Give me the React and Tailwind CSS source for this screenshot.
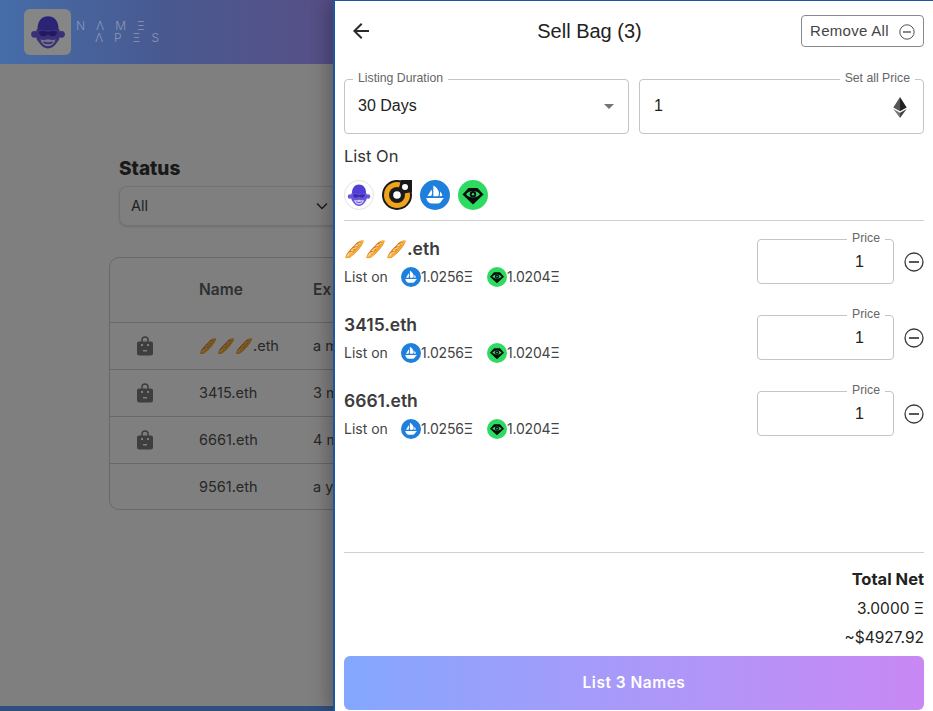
import React from "react";

const sans = "font-['Liberation_Sans',Arial,sans-serif]";
const inter = "font-['Inter',sans-serif]";

function Ape({ className }) {
  return (
    <svg viewBox="0 0 48 48" className={className}>
      <circle cx="6" cy="27" r="4.500" fill="#6a55dc" />
      <circle cx="42" cy="27" r="4.500" fill="#6a55dc" />
      <path d="M9 20h30c2 8 1 14-3 18-3 5-8 8-12 8s-9-3-12-8c-4-4-5-10-3-18z" fill="#6a55dc" />
      <path d="M10 20C10 9 16 3 24 3s14 6 14 17c-8 2-20 2-28 0z" fill="#4f3fd4" />
      <path d="M12 23.500c3-1.500 8-1 12 .5 4-1.500 9-2 12-.5 0 4-3 6-6 6-3 0-5-2-6-3-1 1-3 3-6 3-3 0-6-2-6-6z" fill="#3a2cae" />
      <path d="M14 34c3 1 7 .5 10-.5 3 1 7 1.500 10 .5-1 5-5 9-10 9s-9-4-10-9z" fill="#d6cff8" />
      <path d="M18 37.500c4 2 8 2 12 0" stroke="#5b43cf" strokeWidth="1.800" fill="none" />
    </svg>
  );
}

function OpenSea({ className }) {
  return (
    <svg viewBox="0 0 30 30" className={className}>
      <circle cx="15" cy="15" r="15" fill="#1f7fdc" />
      <path d="M7.500 16 11.500 9.500c1 2.300.9 4.600-.4 6.500z" fill="#fff" />
      <path d="M13.300 5.500c3.500 1.800 5.700 5.100 5.700 8 0 1-.4 2-1 2.800h-4.700z" fill="#fff" />
      <path d="M20 11.500c1.400 1.200 2.300 2.800 2.300 4.200l-2.700.8c.4-1.600.6-3.300.4-5z" fill="#fff" />
      <path d="M6.300 18h17.900c-.6.600-1.400 1-2 1.900-1 1.700-2.200 3.600-4.400 3.600h-6.300c-2.700 0-4.500-2.400-5.200-5.500z" fill="#fff" />
    </svg>
  );
}

function Looks({ className }) {
  return (
    <svg viewBox="0 0 30 30" className={className}>
      <circle cx="15" cy="15" r="15" fill="#2edb62" />
      <path d="M10.500 8h9l6 6.500L15 24.500 4.500 14.500z" fill="#0a0a0a" />
      <path d="M8 14.300c3.800-4.300 10.200-4.300 14 0-3.800 4.300-10.200 4.300-14 0z" fill="#2edb62" />
      <circle cx="15" cy="14.300" r="3.200" fill="#0a0a0a" />
      <circle cx="15" cy="14.300" r="1.200" fill="#2edb62" />
    </svg>
  );
}

function X2() {
  return (
    <svg viewBox="0 0 30 30" className="w-[30px] h-[30px]">
      <circle cx="15" cy="15" r="15" fill="#1a1a1a" />
      <circle cx="15" cy="15" r="13" fill="#f0a41e" />
      <path d="M15 15 19 0h11v12z" fill="#1a1a1a" />
      <circle cx="15" cy="15" r="8" fill="#1a1a1a" />
      <circle cx="15" cy="15" r="3.800" fill="#fff" />
      <circle cx="23" cy="7" r="3" fill="#fff" />
    </svg>
  );
}

function Eth() {
  return (
    <svg viewBox="0 0 14 22" className="w-[14px] h-[21px]">
      <path d="M7 0 0 11l7 4z" fill="#555" />
      <path d="M7 0l7 11-7 4z" fill="#222" />
      <path d="M0 12.500 7 22v-5.500z" fill="#777" />
      <path d="M14 12.500 7 22v-5.500z" fill="#444" />
    </svg>
  );
}

function MinusCircle({ size = "w-5 h-5", stroke = 1.3 }) {
  return (
    <svg viewBox="0 0 20 20" className={size} fill="none" stroke="#3a3a3a" strokeWidth={stroke}>
      <circle cx="10" cy="10" r="9" />
      <path d="M5 10h10" strokeWidth={stroke + 0.4} />
    </svg>
  );
}

function Bag() {
  return (
    <svg viewBox="0 0 16 20" className="w-4 h-5">
      <path d="M5 6V4a3 3 0 0 1 6 0v2" fill="none" stroke="#7c7c7c" strokeWidth="1.500" />
      <path d="M2 5.500h12a2 2 0 0 1 2 2V17a2.500 2.500 0 0 1-2.500 2.500h-11A2.500 2.500 0 0 1 0 17V7.500a2 2 0 0 1 2-2z" fill="#7c7c7c" />
      <path d="M4 8h2v2H4zM10 8h2v2h-2zM6 14h4v1.500H6z" fill="#fff" />
    </svg>
  );
}

function Field({ label, right, className, children }) {
  return (
    <div className={`relative border border-[#c4c4c4] rounded-[4px] ${className}`}>
      <span className={`absolute -top-[9px] ${right ? "right-[8px]" : "left-[8px]"} bg-white px-[5px] text-[12.250px] leading-[14px] text-[#666] ${sans}`}>
        {label}
      </span>
      {children}
    </div>
  );
}

function Row({ emoji, name }) {
  return (
    <div className="flex items-start justify-between h-[76px]">
      <div className={`pt-px ${inter}`}>
        <div className="h-6 text-[17.500px] leading-[24px] font-semibold text-[#3c3c3c]">
          {emoji && <span className="text-[16.700px]">{emoji}</span>}
          {name}
        </div>
        <div className="flex items-center mt-[6px] text-[14px] leading-5 text-[#444]">
          <span className="w-[57px]">List on</span>
          <OpenSea className="w-5 h-5" />
          <span className="w-[66px] text-[14px] tracking-[-0.200px]">1.0256Ξ</span>
          <Looks className="w-5 h-5" />
          <span className="text-[14px] tracking-[-0.200px]">1.0204Ξ</span>
        </div>
      </div>
      <div className="flex items-center mt-[3px]">
        <Field label="Price" right className="w-[137px] h-[45px] flex items-center justify-end pr-[29px]">
          <span className={`text-[16px] text-[#222] ${sans}`}>1</span>
        </Field>
        <div className="ml-[10px]"><MinusCircle /></div>
      </div>
    </div>
  );
}

function TableRow({ name, exp, bag, last }) {
  return (
    <div className={`flex items-center text-[14.500px] text-[#505050] ${last ? "h-[46px]" : "h-[47px] border-b border-[#d0d0d0]"}`}>
      <div className="w-[89px] flex justify-center pr-[20px]">{bag && <Bag />}</div>
      <div className="w-[114px] whitespace-nowrap">{name}</div>
      <div className="whitespace-nowrap">{exp}</div>
    </div>
  );
}

export default function App() {
  return (
    <div className={`relative w-[933px] h-[711px] overflow-hidden bg-white ${inter}`}>
      <header className="relative z-10 h-16 bg-gradient-to-r from-[#466ca8] via-[#48598f] via-[18%] to-[#574e86] to-[36%] flex items-center pl-6">
        <div className="w-[47px] h-[46px] rounded-[6px] bg-[#f3f3f3] brightness-[0.55] flex items-center justify-center">
          <Ape className="w-[36px] h-[36px]" />
        </div>
        <div className={`ml-[5px] text-[12px] leading-[12px] font-light text-[#8e97b5] ${inter}`}>
          <div className="tracking-[11px] whitespace-nowrap">NΛMΞ</div>
          <div className="tracking-[11px] whitespace-nowrap pl-[19px]">ΛPΞS</div>
        </div>
      </header>

      <main className="pl-[109px] h-[642px] w-[333px] overflow-hidden">
        <div className="pl-[10px] pt-[93px] w-[400px]">
          <div className="text-[19px] leading-[24px] font-extrabold text-[#333] -mb-[2px]">Status</div>
          <div className="mt-[7px] w-[300px] h-10 bg-white border border-[#e2e2e2] rounded-[8px] shadow-sm flex items-center justify-between px-[11px] text-[14.500px] text-[#444]">
            <span>All</span>
            <svg viewBox="0 0 12 8" className="w-3 h-2 mr-[79px]" fill="none" stroke="#333" strokeWidth="1.500"><path d="M1 1.500 6 6.500l5-5" /></svg>
          </div>
        </div>
        <div className="mt-[31px] w-[600px] h-[253px] border border-[#d0d0d0] rounded-[10px]">
          <div className="flex items-center h-[65px] border-b border-[#d0d0d0] text-[15.500px] font-semibold text-[#606060]">
            <div className="w-[89px]" />
            <div className="w-[114px]">Name</div>
            <div>Ex</div>
          </div>
          <TableRow bag name="🥖🥖🥖.eth" exp="a m" />
          <TableRow bag name="3415.eth" exp="3 m" />
          <TableRow bag name="6661.eth" exp="4 m" />
          <TableRow last name="9561.eth" exp="a y" />
        </div>
      </main>
      <div className="h-[5px] bg-[#5f9fff]" />

      <div className="absolute inset-0 bg-black/50" />

      <aside className="absolute z-20 top-0 right-0 bottom-0 w-[600px] bg-white border-l-2 border-t border-[#1b56a4] pl-[9px] pr-[9px] flex flex-col shadow-[-6px_0_16px_rgba(0,0,0,0.25)]">
        <div className="flex items-center justify-between mt-[14px] h-8">
          <svg viewBox="0 0 24 24" className="w-6 h-6 ml-[5px]" fill="#2a2a2a"><path d="M20 11H7.830l5.590-5.590L12 4l-8 8 8 8 1.410-1.410L7.830 13H20z" /></svg>
          <div className={`ml-[5px] text-[20px] leading-8 text-[#222] ${sans}`}>Sell Bag (3)</div>
          <button className={`w-[123px] h-8 border border-[#8a8a8a] rounded-[4px] flex items-center pl-2 pt-px text-[15px] tracking-[0.300px] text-[#444] ${sans}`}>
            Remove All
            <span className="ml-[10px]"><MinusCircle size="w-4 h-4" stroke={1.1} /></span>
          </button>
        </div>

        <div className="flex gap-[10px] mt-8">
          <Field label="Listing Duration" className="w-[285px] h-[55px] flex items-center justify-between pl-[13px] pr-[14px]">
            <span className={`text-[16px] text-[#222] -mt-[2px] ${sans}`}>30 Days</span>
            <svg viewBox="0 0 10 5" className="w-[10px] h-[5px]"><path d="M0 0h10L5 5z" fill="#757575" /></svg>
          </Field>
          <Field label="Set all Price" right className="w-[285px] h-[55px] flex items-center justify-between pl-[14px] pr-4">
            <span className={`text-[16px] text-[#222] -mt-[2px] ${sans}`}>1</span>
            <span className="mt-[2px]"><Eth /></span>
          </Field>
        </div>

        <div className="mt-[10px] text-[16.500px] leading-6 text-[#333]">List On</div>
        <div className="flex gap-2 mt-3">
          <div className="w-[30px] h-[30px] rounded-full border border-[#e4e4e4] flex items-center justify-center">
            <Ape className="w-6 h-6" />
          </div>
          <X2 />
          <OpenSea className="w-[30px] h-[30px]" />
          <Looks className="w-[30px] h-[30px]" />
        </div>
        <div className="h-px bg-[#cfcfcf] mt-[10px]" />

        <div className="pt-[15px] flex-1">
          <Row emoji="🥖🥖🥖" name=".eth" />
          <Row name="3415.eth" />
          <Row name="6661.eth" />
        </div>

        <div className="h-px bg-[#cfcfcf]" />
        <div className="text-right text-[#222] mt-[14px]">
          <div className="text-[16.500px] leading-6 font-bold">Total Net</div>
          <div className="text-[15.500px] leading-6 mt-[6px]">3.0000 Ξ</div>
          <div className="text-[15.500px] leading-6 mt-[5px]">~$4927.92</div>
        </div>
        <button className="h-[54px] mt-[6px] mb-px rounded-[6px] bg-gradient-to-r from-[#84a7fe] to-[#c888f4] text-white text-[15.500px] font-semibold tracking-[0.500px]">
          List 3 Names
        </button>
      </aside>
    </div>
  );
}
